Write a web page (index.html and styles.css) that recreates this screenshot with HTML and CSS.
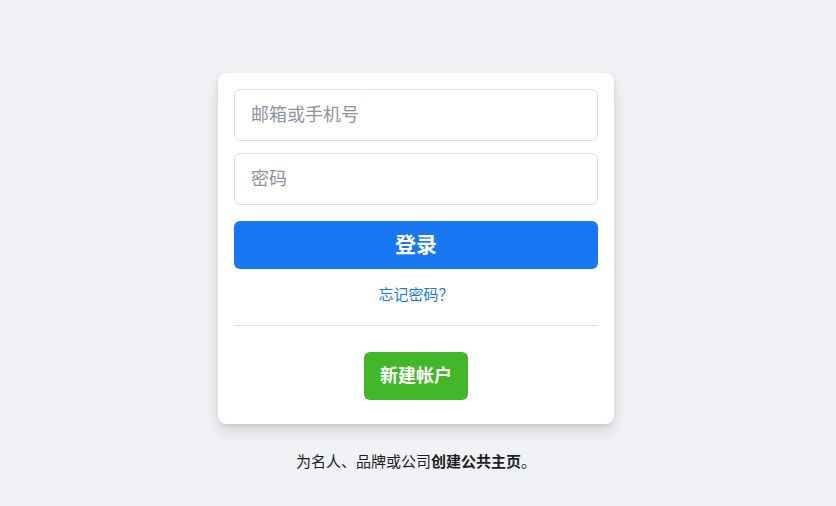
FILE: index.html
```html
<!DOCTYPE html>
<html lang="zh-CN">
<head>
<meta charset="utf-8">
<link rel="stylesheet" href="styles.css">
</head>
<body>
<main class="page">
  <div class="card">
    <form class="login-form">
      <input class="field" type="text" placeholder="邮箱或手机号">
      <input class="field" type="password" placeholder="密码">
      <button class="btn-login" type="button">登录</button>
    </form>
    <div class="forgot"><a href="#">忘记密码？</a></div>
    <div class="divider"></div>
    <div class="create-row"><button class="btn-create" type="button">新建帐户</button></div>
  </div>
  <p class="footer-note"><span>为名人、品牌或公司</span><b>创建公共主页</b>。</p>
</main>
</body>
</html>
```
FILE: styles.css
```css
* { box-sizing: border-box; }
html, body { margin: 0; padding: 0; }
body {
  background: #f0f2f5;
  font-family: "Noto Sans CJK SC", "Noto Sans", "Liberation Sans", sans-serif;
  color: #1c1e21;
}
.page {
  display: flex;
  flex-direction: column;
  align-items: center;
  padding: 73px 4px 0 0;
}
.card {
  width: 396px;
  background: #fff;
  border-radius: 8px;
  box-shadow: 0 2px 4px rgba(0,0,0,.1), 0 8px 16px rgba(0,0,0,.1);
  padding: 16px 16px 24px;
}
.login-form {
  display: flex;
  flex-direction: column;
}
.field {
  height: 52px;
  border: 1px solid #dddfe2;
  border-radius: 6px;
  padding: 0 16px 4px;
  font-family: inherit;
  font-size: 18px;
  color: #1d2129;
  outline: none;
  margin-bottom: 12px;
}
.field::placeholder { color: #8d949e; }
.btn-login {
  margin-top: 4px;
  height: 48px;
  border: none;
  border-radius: 6px;
  background: #1877f2;
  color: #fff;
  font-family: inherit;
  font-size: 21px;
  font-weight: 700;
  line-height: 44px;
  padding: 0 0 4px;
}
.forgot {
  margin-top: 14px;
  text-align: center;
  line-height: 20px;
  height: 20px;
}
.forgot a {
  color: #1877f2;
  font-size: 15px;
  text-decoration: none;
}
.divider {
  margin-top: 22px;
  border-top: 1px solid #dadde1;
}
.create-row {
  display: flex;
  justify-content: center;
  margin-top: 26px;
}
.btn-create {
  height: 48px;
  padding: 0 16px 4px;
  border: none;
  border-radius: 6px;
  background: #42b72a;
  color: #fff;
  font-family: inherit;
  font-size: 18px;
  font-weight: 700;
}
.footer-note {
  margin: 27px 0 0;
  font-size: 15px;
  line-height: 20px;
  color: #1c1e21;
  text-align: center;
}
.footer-note b { font-weight: 700; }
```
